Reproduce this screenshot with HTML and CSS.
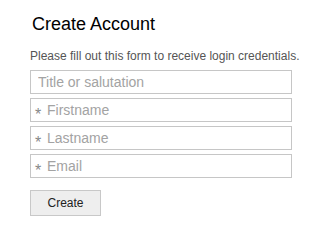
FILE: index.html
```html
<!DOCTYPE html>
<html lang="en">
<head>
    <meta charset="UTF-8">
    <meta name="viewport" content="width=device-width, initial-scale=1.0">
    <title>Create Account</title>
    <link rel="stylesheet" href="styles.css">
</head>
<body>
    <div id="container">
        <h1>Create Account</h1>
        <p class="intro">Please fill out this form to receive login credentials.</p>
        <form class="signup">
            <div class="field">
                <input type="text" placeholder="Title or salutation">
            </div>
            <div class="field required">
                <span class="star">*</span>
                <input type="text" placeholder="Firstname">
            </div>
            <div class="field required">
                <span class="star">*</span>
                <input type="text" placeholder="Lastname">
            </div>
            <div class="field required">
                <span class="star">*</span>
                <input type="email" placeholder="Email">
            </div>
            <button type="button">Create</button>
        </form>
    </div>
</body>
</html>
```

FILE: styles.css
```css
body {
    font-family: 'Liberation Sans', Arial, sans-serif;
    background-color: #fff;
    margin: 0;
}

#container {
    padding: 13px 0 0 30px;
}

h1 {
    font-size: 18px;
    font-weight: normal;
    line-height: 22px;
    color: #000;
    margin: 0 0 14px 2px;
}

.intro {
    font-size: 12px;
    line-height: 14px;
    color: #555;
    white-space: nowrap;
    margin: 0 0 7px 0;
}

.signup {
    width: 262px;
}

.field {
    position: relative;
    margin-bottom: 4px;
}

.field input {
    display: block;
    box-sizing: border-box;
    width: 262px;
    height: 24px;
    margin: 0;
    padding: 0 7px;
    border: 1px solid #c6c6c6;
    font-family: inherit;
    font-size: 14px;
    color: #333;
    outline: none;
}

.field input::placeholder {
    color: #a3a3a3;
}

.required input {
    padding-left: 16px;
}

.star {
    position: absolute;
    left: 5px;
    top: 9px;
    font-size: 16px;
    line-height: 16px;
    color: #888;
}

button {
    margin-top: 8px;
    width: 71px;
    height: 26px;
    padding: 0;
    font-family: inherit;
    font-size: 12px;
    color: #222;
    background-color: #eee;
    border: 1px solid #c8c8c8;
    border-radius: 0;
    cursor: pointer;
}

button:hover {
    background-color: #e2e2e2;
}
```
